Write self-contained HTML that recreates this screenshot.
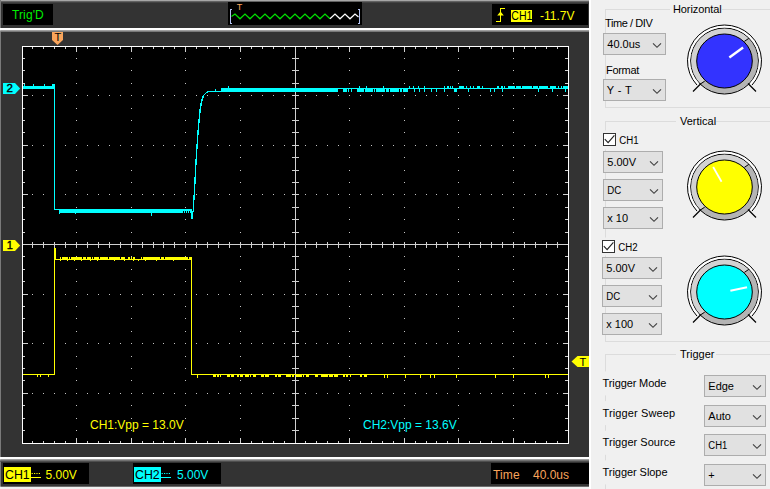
<!DOCTYPE html>
<html><head><meta charset="utf-8"><title>Oscilloscope</title>
<style>
html,body{margin:0;padding:0;background:#f0f0f0;overflow:hidden}
svg{display:block;font-family:"Liberation Sans",Arial,sans-serif}
</style></head><body>
<svg width="770" height="489" viewBox="0 0 770 489">
<rect x="0" y="0" width="770" height="489" fill="#f0f0f0"/>
<rect x="0" y="0" width="589" height="489" fill="#333333"/>
<rect x="0" y="0" width="589" height="1.3" fill="#a6a6a6"/>
<rect x="0" y="1.3" width="589" height="1" fill="#686868"/>
<rect x="0" y="0" width="1" height="489" fill="#7a7a7a"/>
<rect x="0" y="28" width="590" height="2.6" fill="#ffffff"/>
<rect x="0" y="30.6" width="589" height="1.2" fill="#8a8a8a"/>
<rect x="0" y="457" width="590" height="2.6" fill="#ffffff"/>
<rect x="0" y="459.6" width="589" height="1.2" fill="#8a8a8a"/>
<rect x="0" y="460.8" width="589" height="1" fill="#555555"/>
<rect x="0" y="486.7" width="589" height="3" fill="#f0f0f0"/>
<rect x="589" y="0" width="2" height="489" fill="#ffffff"/>
<rect x="3" y="4" width="50" height="21" fill="#000"/>
<rect x="228" y="2" width="134" height="23" fill="#000"/>
<rect x="492" y="4" width="96" height="21" fill="#000"/>
<rect x="3" y="463" width="86" height="21" fill="#000"/>
<rect x="133" y="463" width="88" height="21" fill="#000"/>
<rect x="491" y="463" width="98" height="21" fill="#000"/>
<rect x="22" y="46" width="547" height="398" fill="#000"/>
<path d="M32 95h1v1h-1zM32 145h1v1h-1zM32 194h1v1h-1zM32 294h1v1h-1zM32 343h1v1h-1zM32 393h1v1h-1zM43 95h1v1h-1zM43 145h1v1h-1zM43 194h1v1h-1zM43 294h1v1h-1zM43 343h1v1h-1zM43 393h1v1h-1zM54 95h1v1h-1zM54 145h1v1h-1zM54 194h1v1h-1zM54 294h1v1h-1zM54 343h1v1h-1zM54 393h1v1h-1zM65 95h1v1h-1zM65 145h1v1h-1zM65 194h1v1h-1zM65 294h1v1h-1zM65 343h1v1h-1zM65 393h1v1h-1zM76 58h1v1h-1zM76 70h1v1h-1zM76 83h1v1h-1zM76 95h1v1h-1zM76 108h1v1h-1zM76 120h1v1h-1zM76 132h1v1h-1zM76 145h1v1h-1zM76 157h1v1h-1zM76 170h1v1h-1zM76 182h1v1h-1zM76 194h1v1h-1zM76 207h1v1h-1zM76 219h1v1h-1zM76 232h1v1h-1zM76 244h1v1h-1zM76 256h1v1h-1zM76 269h1v1h-1zM76 281h1v1h-1zM76 294h1v1h-1zM76 306h1v1h-1zM76 318h1v1h-1zM76 331h1v1h-1zM76 343h1v1h-1zM76 356h1v1h-1zM76 368h1v1h-1zM76 380h1v1h-1zM76 393h1v1h-1zM76 405h1v1h-1zM76 418h1v1h-1zM76 430h1v1h-1zM87 95h1v1h-1zM87 145h1v1h-1zM87 194h1v1h-1zM87 294h1v1h-1zM87 343h1v1h-1zM87 393h1v1h-1zM98 95h1v1h-1zM98 145h1v1h-1zM98 194h1v1h-1zM98 294h1v1h-1zM98 343h1v1h-1zM98 393h1v1h-1zM109 95h1v1h-1zM109 145h1v1h-1zM109 194h1v1h-1zM109 294h1v1h-1zM109 343h1v1h-1zM109 393h1v1h-1zM120 95h1v1h-1zM120 145h1v1h-1zM120 194h1v1h-1zM120 294h1v1h-1zM120 343h1v1h-1zM120 393h1v1h-1zM131 58h1v1h-1zM131 70h1v1h-1zM131 83h1v1h-1zM131 95h1v1h-1zM131 108h1v1h-1zM131 120h1v1h-1zM131 132h1v1h-1zM131 145h1v1h-1zM131 157h1v1h-1zM131 170h1v1h-1zM131 182h1v1h-1zM131 194h1v1h-1zM131 207h1v1h-1zM131 219h1v1h-1zM131 232h1v1h-1zM131 244h1v1h-1zM131 256h1v1h-1zM131 269h1v1h-1zM131 281h1v1h-1zM131 294h1v1h-1zM131 306h1v1h-1zM131 318h1v1h-1zM131 331h1v1h-1zM131 343h1v1h-1zM131 356h1v1h-1zM131 368h1v1h-1zM131 380h1v1h-1zM131 393h1v1h-1zM131 405h1v1h-1zM131 418h1v1h-1zM131 430h1v1h-1zM142 95h1v1h-1zM142 145h1v1h-1zM142 194h1v1h-1zM142 294h1v1h-1zM142 343h1v1h-1zM142 393h1v1h-1zM153 95h1v1h-1zM153 145h1v1h-1zM153 194h1v1h-1zM153 294h1v1h-1zM153 343h1v1h-1zM153 393h1v1h-1zM163 95h1v1h-1zM163 145h1v1h-1zM163 194h1v1h-1zM163 294h1v1h-1zM163 343h1v1h-1zM163 393h1v1h-1zM174 95h1v1h-1zM174 145h1v1h-1zM174 194h1v1h-1zM174 294h1v1h-1zM174 343h1v1h-1zM174 393h1v1h-1zM185 58h1v1h-1zM185 70h1v1h-1zM185 83h1v1h-1zM185 95h1v1h-1zM185 108h1v1h-1zM185 120h1v1h-1zM185 132h1v1h-1zM185 145h1v1h-1zM185 157h1v1h-1zM185 170h1v1h-1zM185 182h1v1h-1zM185 194h1v1h-1zM185 207h1v1h-1zM185 219h1v1h-1zM185 232h1v1h-1zM185 244h1v1h-1zM185 256h1v1h-1zM185 269h1v1h-1zM185 281h1v1h-1zM185 294h1v1h-1zM185 306h1v1h-1zM185 318h1v1h-1zM185 331h1v1h-1zM185 343h1v1h-1zM185 356h1v1h-1zM185 368h1v1h-1zM185 380h1v1h-1zM185 393h1v1h-1zM185 405h1v1h-1zM185 418h1v1h-1zM185 430h1v1h-1zM196 95h1v1h-1zM196 145h1v1h-1zM196 194h1v1h-1zM196 294h1v1h-1zM196 343h1v1h-1zM196 393h1v1h-1zM207 95h1v1h-1zM207 145h1v1h-1zM207 194h1v1h-1zM207 294h1v1h-1zM207 343h1v1h-1zM207 393h1v1h-1zM218 95h1v1h-1zM218 145h1v1h-1zM218 194h1v1h-1zM218 294h1v1h-1zM218 343h1v1h-1zM218 393h1v1h-1zM229 95h1v1h-1zM229 145h1v1h-1zM229 194h1v1h-1zM229 294h1v1h-1zM229 343h1v1h-1zM229 393h1v1h-1zM240 58h1v1h-1zM240 70h1v1h-1zM240 83h1v1h-1zM240 95h1v1h-1zM240 108h1v1h-1zM240 120h1v1h-1zM240 132h1v1h-1zM240 145h1v1h-1zM240 157h1v1h-1zM240 170h1v1h-1zM240 182h1v1h-1zM240 194h1v1h-1zM240 207h1v1h-1zM240 219h1v1h-1zM240 232h1v1h-1zM240 244h1v1h-1zM240 256h1v1h-1zM240 269h1v1h-1zM240 281h1v1h-1zM240 294h1v1h-1zM240 306h1v1h-1zM240 318h1v1h-1zM240 331h1v1h-1zM240 343h1v1h-1zM240 356h1v1h-1zM240 368h1v1h-1zM240 380h1v1h-1zM240 393h1v1h-1zM240 405h1v1h-1zM240 418h1v1h-1zM240 430h1v1h-1zM251 95h1v1h-1zM251 145h1v1h-1zM251 194h1v1h-1zM251 294h1v1h-1zM251 343h1v1h-1zM251 393h1v1h-1zM262 95h1v1h-1zM262 145h1v1h-1zM262 194h1v1h-1zM262 294h1v1h-1zM262 343h1v1h-1zM262 393h1v1h-1zM273 95h1v1h-1zM273 145h1v1h-1zM273 194h1v1h-1zM273 294h1v1h-1zM273 343h1v1h-1zM273 393h1v1h-1zM284 95h1v1h-1zM284 145h1v1h-1zM284 194h1v1h-1zM284 294h1v1h-1zM284 343h1v1h-1zM284 393h1v1h-1zM295 95h1v1h-1zM295 145h1v1h-1zM295 194h1v1h-1zM295 294h1v1h-1zM295 343h1v1h-1zM295 393h1v1h-1zM305 95h1v1h-1zM305 145h1v1h-1zM305 194h1v1h-1zM305 294h1v1h-1zM305 343h1v1h-1zM305 393h1v1h-1zM316 95h1v1h-1zM316 145h1v1h-1zM316 194h1v1h-1zM316 294h1v1h-1zM316 343h1v1h-1zM316 393h1v1h-1zM327 95h1v1h-1zM327 145h1v1h-1zM327 194h1v1h-1zM327 294h1v1h-1zM327 343h1v1h-1zM327 393h1v1h-1zM338 95h1v1h-1zM338 145h1v1h-1zM338 194h1v1h-1zM338 294h1v1h-1zM338 343h1v1h-1zM338 393h1v1h-1zM349 58h1v1h-1zM349 70h1v1h-1zM349 83h1v1h-1zM349 95h1v1h-1zM349 108h1v1h-1zM349 120h1v1h-1zM349 132h1v1h-1zM349 145h1v1h-1zM349 157h1v1h-1zM349 170h1v1h-1zM349 182h1v1h-1zM349 194h1v1h-1zM349 207h1v1h-1zM349 219h1v1h-1zM349 232h1v1h-1zM349 244h1v1h-1zM349 256h1v1h-1zM349 269h1v1h-1zM349 281h1v1h-1zM349 294h1v1h-1zM349 306h1v1h-1zM349 318h1v1h-1zM349 331h1v1h-1zM349 343h1v1h-1zM349 356h1v1h-1zM349 368h1v1h-1zM349 380h1v1h-1zM349 393h1v1h-1zM349 405h1v1h-1zM349 418h1v1h-1zM349 430h1v1h-1zM360 95h1v1h-1zM360 145h1v1h-1zM360 194h1v1h-1zM360 294h1v1h-1zM360 343h1v1h-1zM360 393h1v1h-1zM371 95h1v1h-1zM371 145h1v1h-1zM371 194h1v1h-1zM371 294h1v1h-1zM371 343h1v1h-1zM371 393h1v1h-1zM382 95h1v1h-1zM382 145h1v1h-1zM382 194h1v1h-1zM382 294h1v1h-1zM382 343h1v1h-1zM382 393h1v1h-1zM393 95h1v1h-1zM393 145h1v1h-1zM393 194h1v1h-1zM393 294h1v1h-1zM393 343h1v1h-1zM393 393h1v1h-1zM404 58h1v1h-1zM404 70h1v1h-1zM404 83h1v1h-1zM404 95h1v1h-1zM404 108h1v1h-1zM404 120h1v1h-1zM404 132h1v1h-1zM404 145h1v1h-1zM404 157h1v1h-1zM404 170h1v1h-1zM404 182h1v1h-1zM404 194h1v1h-1zM404 207h1v1h-1zM404 219h1v1h-1zM404 232h1v1h-1zM404 244h1v1h-1zM404 256h1v1h-1zM404 269h1v1h-1zM404 281h1v1h-1zM404 294h1v1h-1zM404 306h1v1h-1zM404 318h1v1h-1zM404 331h1v1h-1zM404 343h1v1h-1zM404 356h1v1h-1zM404 368h1v1h-1zM404 380h1v1h-1zM404 393h1v1h-1zM404 405h1v1h-1zM404 418h1v1h-1zM404 430h1v1h-1zM415 95h1v1h-1zM415 145h1v1h-1zM415 194h1v1h-1zM415 294h1v1h-1zM415 343h1v1h-1zM415 393h1v1h-1zM426 95h1v1h-1zM426 145h1v1h-1zM426 194h1v1h-1zM426 294h1v1h-1zM426 343h1v1h-1zM426 393h1v1h-1zM436 95h1v1h-1zM436 145h1v1h-1zM436 194h1v1h-1zM436 294h1v1h-1zM436 343h1v1h-1zM436 393h1v1h-1zM447 95h1v1h-1zM447 145h1v1h-1zM447 194h1v1h-1zM447 294h1v1h-1zM447 343h1v1h-1zM447 393h1v1h-1zM458 58h1v1h-1zM458 70h1v1h-1zM458 83h1v1h-1zM458 95h1v1h-1zM458 108h1v1h-1zM458 120h1v1h-1zM458 132h1v1h-1zM458 145h1v1h-1zM458 157h1v1h-1zM458 170h1v1h-1zM458 182h1v1h-1zM458 194h1v1h-1zM458 207h1v1h-1zM458 219h1v1h-1zM458 232h1v1h-1zM458 244h1v1h-1zM458 256h1v1h-1zM458 269h1v1h-1zM458 281h1v1h-1zM458 294h1v1h-1zM458 306h1v1h-1zM458 318h1v1h-1zM458 331h1v1h-1zM458 343h1v1h-1zM458 356h1v1h-1zM458 368h1v1h-1zM458 380h1v1h-1zM458 393h1v1h-1zM458 405h1v1h-1zM458 418h1v1h-1zM458 430h1v1h-1zM469 95h1v1h-1zM469 145h1v1h-1zM469 194h1v1h-1zM469 294h1v1h-1zM469 343h1v1h-1zM469 393h1v1h-1zM480 95h1v1h-1zM480 145h1v1h-1zM480 194h1v1h-1zM480 294h1v1h-1zM480 343h1v1h-1zM480 393h1v1h-1zM491 95h1v1h-1zM491 145h1v1h-1zM491 194h1v1h-1zM491 294h1v1h-1zM491 343h1v1h-1zM491 393h1v1h-1zM502 95h1v1h-1zM502 145h1v1h-1zM502 194h1v1h-1zM502 294h1v1h-1zM502 343h1v1h-1zM502 393h1v1h-1zM513 58h1v1h-1zM513 70h1v1h-1zM513 83h1v1h-1zM513 95h1v1h-1zM513 108h1v1h-1zM513 120h1v1h-1zM513 132h1v1h-1zM513 145h1v1h-1zM513 157h1v1h-1zM513 170h1v1h-1zM513 182h1v1h-1zM513 194h1v1h-1zM513 207h1v1h-1zM513 219h1v1h-1zM513 232h1v1h-1zM513 244h1v1h-1zM513 256h1v1h-1zM513 269h1v1h-1zM513 281h1v1h-1zM513 294h1v1h-1zM513 306h1v1h-1zM513 318h1v1h-1zM513 331h1v1h-1zM513 343h1v1h-1zM513 356h1v1h-1zM513 368h1v1h-1zM513 380h1v1h-1zM513 393h1v1h-1zM513 405h1v1h-1zM513 418h1v1h-1zM513 430h1v1h-1zM524 95h1v1h-1zM524 145h1v1h-1zM524 194h1v1h-1zM524 294h1v1h-1zM524 343h1v1h-1zM524 393h1v1h-1zM535 95h1v1h-1zM535 145h1v1h-1zM535 194h1v1h-1zM535 294h1v1h-1zM535 343h1v1h-1zM535 393h1v1h-1zM546 95h1v1h-1zM546 145h1v1h-1zM546 194h1v1h-1zM546 294h1v1h-1zM546 343h1v1h-1zM546 393h1v1h-1zM557 95h1v1h-1zM557 145h1v1h-1zM557 194h1v1h-1zM557 294h1v1h-1zM557 343h1v1h-1zM557 393h1v1h-1z" fill="#c4c4c4" shape-rendering="crispEdges"/>
<path d="M23 244h545v1h-545zM295 47h1v396h-1zM32 47h1v2h-1zM32 441h1v2h-1zM32 242h1v6h-1zM43 47h1v2h-1zM43 441h1v2h-1zM43 242h1v6h-1zM54 47h1v2h-1zM54 441h1v2h-1zM54 242h1v6h-1zM65 47h1v2h-1zM65 441h1v2h-1zM65 242h1v6h-1zM76 47h1v5h-1zM76 438h1v5h-1zM76 242h1v6h-1zM87 47h1v2h-1zM87 441h1v2h-1zM87 242h1v6h-1zM98 47h1v2h-1zM98 441h1v2h-1zM98 242h1v6h-1zM109 47h1v2h-1zM109 441h1v2h-1zM109 242h1v6h-1zM120 47h1v2h-1zM120 441h1v2h-1zM120 242h1v6h-1zM131 47h1v5h-1zM131 438h1v5h-1zM131 242h1v6h-1zM142 47h1v2h-1zM142 441h1v2h-1zM142 242h1v6h-1zM153 47h1v2h-1zM153 441h1v2h-1zM153 242h1v6h-1zM163 47h1v2h-1zM163 441h1v2h-1zM163 242h1v6h-1zM174 47h1v2h-1zM174 441h1v2h-1zM174 242h1v6h-1zM185 47h1v5h-1zM185 438h1v5h-1zM185 242h1v6h-1zM196 47h1v2h-1zM196 441h1v2h-1zM196 242h1v6h-1zM207 47h1v2h-1zM207 441h1v2h-1zM207 242h1v6h-1zM218 47h1v2h-1zM218 441h1v2h-1zM218 242h1v6h-1zM229 47h1v2h-1zM229 441h1v2h-1zM229 242h1v6h-1zM240 47h1v5h-1zM240 438h1v5h-1zM240 242h1v6h-1zM251 47h1v2h-1zM251 441h1v2h-1zM251 242h1v6h-1zM262 47h1v2h-1zM262 441h1v2h-1zM262 242h1v6h-1zM273 47h1v2h-1zM273 441h1v2h-1zM273 242h1v6h-1zM284 47h1v2h-1zM284 441h1v2h-1zM284 242h1v6h-1zM295 47h1v5h-1zM295 438h1v5h-1zM305 47h1v2h-1zM305 441h1v2h-1zM305 242h1v6h-1zM316 47h1v2h-1zM316 441h1v2h-1zM316 242h1v6h-1zM327 47h1v2h-1zM327 441h1v2h-1zM327 242h1v6h-1zM338 47h1v2h-1zM338 441h1v2h-1zM338 242h1v6h-1zM349 47h1v5h-1zM349 438h1v5h-1zM349 242h1v6h-1zM360 47h1v2h-1zM360 441h1v2h-1zM360 242h1v6h-1zM371 47h1v2h-1zM371 441h1v2h-1zM371 242h1v6h-1zM382 47h1v2h-1zM382 441h1v2h-1zM382 242h1v6h-1zM393 47h1v2h-1zM393 441h1v2h-1zM393 242h1v6h-1zM404 47h1v5h-1zM404 438h1v5h-1zM404 242h1v6h-1zM415 47h1v2h-1zM415 441h1v2h-1zM415 242h1v6h-1zM426 47h1v2h-1zM426 441h1v2h-1zM426 242h1v6h-1zM436 47h1v2h-1zM436 441h1v2h-1zM436 242h1v6h-1zM447 47h1v2h-1zM447 441h1v2h-1zM447 242h1v6h-1zM458 47h1v5h-1zM458 438h1v5h-1zM458 242h1v6h-1zM469 47h1v2h-1zM469 441h1v2h-1zM469 242h1v6h-1zM480 47h1v2h-1zM480 441h1v2h-1zM480 242h1v6h-1zM491 47h1v2h-1zM491 441h1v2h-1zM491 242h1v6h-1zM502 47h1v2h-1zM502 441h1v2h-1zM502 242h1v6h-1zM513 47h1v5h-1zM513 438h1v5h-1zM513 242h1v6h-1zM524 47h1v2h-1zM524 441h1v2h-1zM524 242h1v6h-1zM535 47h1v2h-1zM535 441h1v2h-1zM535 242h1v6h-1zM546 47h1v2h-1zM546 441h1v2h-1zM546 242h1v6h-1zM557 47h1v2h-1zM557 441h1v2h-1zM557 242h1v6h-1zM23 58h2v1h-2zM565 58h3v1h-3zM292 58h7v1h-7zM23 70h2v1h-2zM565 70h3v1h-3zM292 70h7v1h-7zM23 83h2v1h-2zM565 83h3v1h-3zM292 83h7v1h-7zM23 95h5v1h-5zM563 95h5v1h-5zM292 95h7v1h-7zM23 108h2v1h-2zM565 108h3v1h-3zM292 108h7v1h-7zM23 120h2v1h-2zM565 120h3v1h-3zM292 120h7v1h-7zM23 132h2v1h-2zM565 132h3v1h-3zM292 132h7v1h-7zM23 145h5v1h-5zM563 145h5v1h-5zM292 145h7v1h-7zM23 157h2v1h-2zM565 157h3v1h-3zM292 157h7v1h-7zM23 170h2v1h-2zM565 170h3v1h-3zM292 170h7v1h-7zM23 182h2v1h-2zM565 182h3v1h-3zM292 182h7v1h-7zM23 194h5v1h-5zM563 194h5v1h-5zM292 194h7v1h-7zM23 207h2v1h-2zM565 207h3v1h-3zM292 207h7v1h-7zM23 219h2v1h-2zM565 219h3v1h-3zM292 219h7v1h-7zM23 232h2v1h-2zM565 232h3v1h-3zM292 232h7v1h-7zM23 244h5v1h-5zM563 244h5v1h-5zM23 256h2v1h-2zM565 256h3v1h-3zM292 256h7v1h-7zM23 269h2v1h-2zM565 269h3v1h-3zM292 269h7v1h-7zM23 281h2v1h-2zM565 281h3v1h-3zM292 281h7v1h-7zM23 294h5v1h-5zM563 294h5v1h-5zM292 294h7v1h-7zM23 306h2v1h-2zM565 306h3v1h-3zM292 306h7v1h-7zM23 318h2v1h-2zM565 318h3v1h-3zM292 318h7v1h-7zM23 331h2v1h-2zM565 331h3v1h-3zM292 331h7v1h-7zM23 343h5v1h-5zM563 343h5v1h-5zM292 343h7v1h-7zM23 356h2v1h-2zM565 356h3v1h-3zM292 356h7v1h-7zM23 368h2v1h-2zM565 368h3v1h-3zM292 368h7v1h-7zM23 380h2v1h-2zM565 380h3v1h-3zM292 380h7v1h-7zM23 393h5v1h-5zM563 393h5v1h-5zM292 393h7v1h-7zM23 405h2v1h-2zM565 405h3v1h-3zM292 405h7v1h-7zM23 418h2v1h-2zM565 418h3v1h-3zM292 418h7v1h-7zM23 430h2v1h-2zM565 430h3v1h-3zM292 430h7v1h-7z" fill="#d0d0d0" shape-rendering="crispEdges"/>
<path d="M22 46h547v1h-547zM22 443h547v1h-547zM22 46h1v398h-1zM568 46h1v398h-1z" fill="#ffffff" shape-rendering="crispEdges"/>
<path d="M23 86h32v3h-32zM24 84h1v2h-1zM33 84h1v2h-1zM44 84h1v2h-1zM52 84h3v3h-3zM54 86h1v124h-1zM54 209h5v1h-5zM59 209h124v4h-124zM59 213h1v1h-1zM75 213h1v1h-1zM151 213h1v3h-1zM183 209h9v2h-9zM184 211h1v2h-1zM186 211h1v2h-1zM188 211h1v2h-1zM190 211h1v2h-1zM191 211h2v8h-2zM193 195h1v17h-1zM194 177h1v23h-1zM195 159h1v25h-1zM196 144h1v21h-1zM197 130h1v19h-1zM198 119h1v16h-1zM199 109h1v14h-1zM200 103h1v10h-1zM201 99h1v7h-1zM202 96h1v5h-1zM203 95h1v3h-1zM204 94h1v1h-1zM205 93h1v1h-1zM206 92h1v1h-1zM207 92h1v1h-1zM207 91h14v1h-14zM221 88h117v4h-117zM215 89h1v2h-1zM228 86h1v2h-1zM233 88h1v1h-1zM338 88h230v1h-230zM343 89h1v3h-1zM344 89h3v3h-3zM348 89h1v3h-1zM351 89h1v3h-1zM357 89h5v3h-5zM362 89h2v3h-2zM365 89h3v3h-3zM368 89h5v3h-5zM374 89h1v3h-1zM376 89h3v3h-3zM379 89h5v3h-5zM391 89h3v3h-3zM396 89h3v3h-3zM400 89h2v3h-2zM403 89h5v3h-5zM359 86h1v2h-1zM366 86h1v2h-1zM383 86h1v2h-1zM409 86h1v2h-1zM413 86h1v2h-1zM418 86h1v2h-1zM424 86h1v2h-1zM444 86h1v2h-1zM452 86h1v2h-1zM463 86h1v2h-1zM470 86h1v2h-1zM447 86h2v2h-2zM450 86h1v2h-1zM452 86h1v2h-1zM459 86h4v2h-4zM466 86h1v2h-1zM473 86h1v2h-1zM477 86h3v2h-3zM482 86h1v2h-1zM497 86h2v2h-2zM501 86h2v2h-2zM504 86h1v2h-1zM419 89h1v3h-1zM424 89h1v3h-1zM431 89h1v3h-1zM414 89h1v3h-1zM436 89h1v3h-1zM444 89h1v3h-1zM468 89h1v3h-1zM490 89h1v3h-1zM494 89h1v3h-1zM502 89h1v3h-1zM538 89h1v3h-1zM552 89h1v3h-1zM565 89h1v3h-1zM454 89h3v3h-3zM380 89h5v3h-5zM386 89h3v3h-3zM390 89h3v3h-3zM394 89h5v3h-5zM508 86h7v2h-7zM516 86h3v2h-3zM519 86h2v2h-2zM522 86h10v2h-10zM533 86h3v2h-3zM536 86h2v2h-2zM539 86h3v2h-3zM542 86h6v2h-6zM550 86h6v2h-6zM558 86h1v2h-1zM561 86h1v2h-1zM563 86h5v2h-5z" fill="#00ffff" shape-rendering="crispEdges"/>
<path d="M23 374h32v1h-32zM37 375h1v2h-1zM40 375h1v2h-1zM48 375h1v2h-1zM54 248h1v127h-1zM55 248h1v12h-1zM56 259h136v1h-136zM60 257h1v2h-1zM62 257h2v2h-2zM64 257h4v2h-4zM69 257h1v2h-1zM71 257h11v2h-11zM83 257h3v2h-3zM87 257h4v2h-4zM92 257h1v2h-1zM94 257h4v2h-4zM98 257h1v2h-1zM100 257h8v2h-8zM109 257h11v2h-11zM121 257h4v2h-4zM128 257h2v2h-2zM131 257h1v2h-1zM133 257h2v2h-2zM141 257h1v2h-1zM143 257h6v2h-6zM149 257h11v2h-11zM161 257h3v2h-3zM165 257h8v2h-8zM173 257h2v2h-2zM175 257h2v2h-2zM177 257h4v2h-4zM181 257h3v2h-3zM184 257h4v2h-4zM189 257h2v2h-2zM60 260h1v1h-1zM67 260h1v1h-1zM74 260h1v1h-1zM81 260h1v1h-1zM90 260h1v1h-1zM97 260h1v1h-1zM114 260h1v1h-1zM124 260h1v1h-1zM133 260h1v1h-1zM138 260h1v1h-1zM145 260h1v1h-1zM156 260h1v1h-1zM173 260h1v1h-1zM191 257h1v118h-1zM191 374h377v1h-377zM213 375h3v2h-3zM217 375h2v2h-2zM220 375h1v2h-1zM227 375h3v2h-3zM231 375h3v2h-3zM237 375h2v2h-2zM240 375h3v2h-3zM245 375h4v2h-4zM250 375h1v2h-1zM253 375h3v2h-3zM261 375h3v2h-3zM265 375h4v2h-4zM275 375h2v2h-2zM278 375h3v2h-3zM286 375h5v2h-5zM292 375h2v2h-2zM296 375h6v2h-6zM303 375h1v2h-1zM306 375h3v2h-3zM315 375h3v2h-3zM321 375h7v2h-7zM329 375h4v2h-4zM334 375h4v2h-4zM343 375h2v2h-2zM346 375h2v2h-2zM350 375h1v2h-1zM360 375h2v2h-2zM364 375h3v2h-3zM197 375h1v3h-1zM384 375h1v3h-1zM387 375h1v3h-1zM405 375h1v3h-1zM420 375h1v3h-1zM430 375h1v3h-1zM434 375h1v3h-1zM456 375h1v3h-1zM495 375h1v3h-1zM513 375h1v3h-1zM545 375h1v3h-1zM548 375h1v3h-1z" fill="#ffff00" shape-rendering="crispEdges"/>
<path d="M52 32H63V40L57.5 45L52 40Z" fill="#f9a55c"/>
<path d="M3 83H15L20.2 88.5L15 94H3Z" fill="#00ffff"/>
<path d="M3 240H15L20.2 245.5L15 251H3Z" fill="#ffff00"/>
<path d="M589 356H577.5L571.5 361.5L577.5 367H589Z" fill="#ffff00"/>
<polyline points="231.5,16.5 235,14.0 240,18.8 245,14.0 250,18.8 255,14.0 260,18.8 265,14.0 270,18.8 275,14.0 280,18.8 285,14.0 290,18.8 295,14.0 300,18.8 305,14.0 310,18.8 315,14.0 320,18.8 325,14.0 330,18.8" stroke="#00e000" stroke-width="1.2" fill="none"/>
<polyline points="330,18.8 335,14.0 340,18.8 345,14.0 350,18.8 355,14.0 358.5,17" stroke="#ffffff" stroke-width="1.2" fill="none"/>
<path d="M232 9.5H230.5V23.5H232M358 9.5H359.5V23.5H358" stroke="#b4c4f4" stroke-width="1" fill="none" shape-rendering="crispEdges"/>
<path d="M496 21.5H500.5V8.5H504.5" stroke="#ffff00" stroke-width="1" fill="none" shape-rendering="crispEdges"/>
<path d="M500.5 11.5L503.8 15.5H497.2Z" fill="#ffff00"/>
<rect x="511" y="10" width="21" height="12" fill="#ffff00"/>
<rect x="4" y="467" width="27" height="15" fill="#ffff00"/>
<rect x="134" y="467" width="27" height="15" fill="#00ffff"/>
<path d="M31 477.5H41" stroke="#ffff00" stroke-width="1" shape-rendering="crispEdges"/>
<path d="M31.6 473h1.2v1h-1.2zM34 473h1.2v1h-1.2zM36.4 473h1.2v1h-1.2zM38.8 473h1.2v1h-1.2z" fill="#ffff00"/>
<path d="M161 477.5H171" stroke="#00ffff" stroke-width="1" shape-rendering="crispEdges"/>
<path d="M161.6 473h1.2v1h-1.2zM164 473h1.2v1h-1.2zM166.4 473h1.2v1h-1.2zM168.8 473h1.2v1h-1.2z" fill="#00ffff"/>
<text x="12" y="19" fill="#00f000" font-size="12" text-anchor="start"  letter-spacing="0.12">Trig'D</text>
<text x="236.8" y="10" fill="#f9a55c" font-size="9" text-anchor="start" >T</text>
<text transform="translate(511.3 19.8) scale(0.88 1)" fill="#000" font-size="12" text-anchor="start" >CH1</text>
<text x="540" y="19.8" fill="#ffff00" font-size="12" text-anchor="start" >-11.7V</text>
<text x="54.5" y="41" fill="#000" font-size="11" text-anchor="start" >T</text>
<text transform="translate(6.6 92.4) scale(1.15 1)" fill="#000" font-size="10" text-anchor="start" stroke="#000" stroke-width="0.35">2</text>
<text transform="translate(6.8 248.9) scale(1.1 1)" fill="#000" font-size="10" text-anchor="start" stroke="#000" stroke-width="0.35">1</text>
<text x="579.6" y="366" fill="#000" font-size="11" text-anchor="start" >T</text>
<text x="90" y="429" fill="#ffff00" font-size="12" text-anchor="start" >CH1:Vpp = 13.0V</text>
<text x="363" y="429" fill="#00ffff" font-size="12" text-anchor="start" >CH2:Vpp = 13.6V</text>
<text transform="translate(5 478.8) scale(1.03 1)" fill="#000" font-size="12" text-anchor="start" >CH1</text>
<text x="45.5" y="479" fill="#ffff00" font-size="12" text-anchor="start" >5.00V</text>
<text transform="translate(135 478.8) scale(1.03 1)" fill="#000" font-size="12" text-anchor="start" >CH2</text>
<text x="177" y="479" fill="#00ffff" font-size="12" text-anchor="start" >5.00V</text>
<text x="493" y="479" fill="#f9a55c" font-size="12" text-anchor="start"  letter-spacing="0.15">Time</text>
<text x="533" y="479" fill="#f9a55c" font-size="12" text-anchor="start" >40.0us</text>
<path d="M670 9.5H605.5V107.5H770" stroke="#dcdcdc" fill="none" shape-rendering="crispEdges"/>
<path d="M722 9.5H770" stroke="#dcdcdc" fill="none" shape-rendering="crispEdges"/>
<text x="673" y="12.7" fill="#000" font-size="11" text-anchor="start"  letter-spacing="-0.1">Horizontal</text>
<path d="M676 121.5H605.5V341.5H770" stroke="#dcdcdc" fill="none" shape-rendering="crispEdges"/>
<path d="M716 121.5H770" stroke="#dcdcdc" fill="none" shape-rendering="crispEdges"/>
<text x="680" y="124.7" fill="#000" font-size="11" text-anchor="start" >Vertical</text>
<path d="M676 354.5H605.5V500H770" stroke="#dcdcdc" fill="none" shape-rendering="crispEdges"/>
<path d="M716 354.5H770" stroke="#dcdcdc" fill="none" shape-rendering="crispEdges"/>
<text x="680" y="357.7" fill="#000" font-size="11" text-anchor="start" >Trigger</text>
<text x="605" y="27" fill="#000" font-size="11" text-anchor="start"  letter-spacing="-0.42">Time / DIV</text>
<rect x="603.5" y="33.5" width="62" height="21" fill="#e1e1e1" stroke="#adadad" shape-rendering="crispEdges"/>
<text x="607.3" y="48.2" fill="#000" font-size="11" text-anchor="start" >40.0us</text>
<path d="M653 43.3L657 47.3L661 43.3" stroke="#404040" stroke-width="1.15" fill="none"/>
<text x="606" y="73.7" fill="#000" font-size="11" text-anchor="start"  letter-spacing="-0.32">Format</text>
<rect x="603.5" y="79.5" width="62" height="21" fill="#e1e1e1" stroke="#adadad" shape-rendering="crispEdges"/>
<text x="606.8" y="94.2" fill="#000" font-size="11" text-anchor="start"  letter-spacing="0.35">Y - T</text>
<path d="M653 89.3L657 93.3L661 89.3" stroke="#404040" stroke-width="1.15" fill="none"/>
<rect x="603" y="130.5" width="40" height="19" fill="#f0f0f0"/>
<rect x="603.5" y="133.5" width="12" height="12" fill="#fff" stroke="#333" shape-rendering="crispEdges"/>
<path d="M604.8 139.2L608.1 142.6L614.4 135.4" stroke="#222" stroke-width="1.15" fill="none"/>
<text transform="translate(619.3 143.7) scale(0.88 1)" fill="#000" font-size="11" text-anchor="start" >CH1</text>
<rect x="603.5" y="151.5" width="59" height="21" fill="#e1e1e1" stroke="#adadad" shape-rendering="crispEdges"/>
<text x="607.3" y="166.2" fill="#000" font-size="11" text-anchor="start" >5.00V</text>
<path d="M650 161.3L654 165.3L658 161.3" stroke="#404040" stroke-width="1.15" fill="none"/>
<rect x="603.5" y="179.5" width="59" height="21" fill="#e1e1e1" stroke="#adadad" shape-rendering="crispEdges"/>
<text transform="translate(607.3 194.2) scale(0.88 1)" fill="#000" font-size="11" text-anchor="start" >DC</text>
<path d="M650 189.3L654 193.3L658 189.3" stroke="#404040" stroke-width="1.15" fill="none"/>
<rect x="603.5" y="207.5" width="59" height="21" fill="#e1e1e1" stroke="#adadad" shape-rendering="crispEdges"/>
<text x="607.3" y="222.2" fill="#000" font-size="11" text-anchor="start" >x 10</text>
<path d="M650 217.3L654 221.3L658 217.3" stroke="#404040" stroke-width="1.15" fill="none"/>
<rect x="602" y="237.5" width="40" height="18" fill="#f0f0f0"/>
<rect x="602.5" y="240.5" width="12" height="12" fill="#fff" stroke="#333" shape-rendering="crispEdges"/>
<path d="M603.8 246.2L607.1 249.6L613.4 242.4" stroke="#222" stroke-width="1.15" fill="none"/>
<text transform="translate(618.3 250.7) scale(0.88 1)" fill="#000" font-size="11" text-anchor="start" >CH2</text>
<rect x="602.5" y="257.5" width="59" height="21" fill="#e1e1e1" stroke="#adadad" shape-rendering="crispEdges"/>
<text x="606.3" y="272.2" fill="#000" font-size="11" text-anchor="start" >5.00V</text>
<path d="M649 267.3L653 271.3L657 267.3" stroke="#404040" stroke-width="1.15" fill="none"/>
<rect x="602.5" y="285.5" width="59" height="21" fill="#e1e1e1" stroke="#adadad" shape-rendering="crispEdges"/>
<text transform="translate(606.3 300.2) scale(0.88 1)" fill="#000" font-size="11" text-anchor="start" >DC</text>
<path d="M649 295.3L653 299.3L657 295.3" stroke="#404040" stroke-width="1.15" fill="none"/>
<rect x="602.5" y="313.5" width="59" height="21" fill="#e1e1e1" stroke="#adadad" shape-rendering="crispEdges"/>
<text x="606.3" y="328.2" fill="#000" font-size="11" text-anchor="start" >x 100</text>
<path d="M649 323.3L653 327.3L657 323.3" stroke="#404040" stroke-width="1.15" fill="none"/>
<rect x="602" y="371.4" width="80" height="24" fill="#f0f0f0"/>
<text x="602.6" y="387.0" fill="#000" font-size="11" text-anchor="start"  letter-spacing="-0.12">Trigger Mode</text>
<rect x="704.5" y="375.5" width="61" height="21" fill="#e1e1e1" stroke="#adadad" shape-rendering="crispEdges"/>
<text x="708.3" y="390.2" fill="#000" font-size="11" text-anchor="start" >Edge</text>
<path d="M753 385.3L757 389.3L761 385.3" stroke="#404040" stroke-width="1.15" fill="none"/>
<rect x="602" y="401.1" width="80" height="24" fill="#f0f0f0"/>
<text x="602.6" y="417.0" fill="#000" font-size="11" text-anchor="start"  letter-spacing="0.12">Trigger Sweep</text>
<rect x="704.5" y="405.5" width="61" height="21" fill="#e1e1e1" stroke="#adadad" shape-rendering="crispEdges"/>
<text x="708.3" y="420.2" fill="#000" font-size="11" text-anchor="start" >Auto</text>
<path d="M753 415.3L757 419.3L761 415.3" stroke="#404040" stroke-width="1.15" fill="none"/>
<rect x="602" y="430.8" width="80" height="24" fill="#f0f0f0"/>
<text x="602.6" y="446.0" fill="#000" font-size="11" text-anchor="start"  letter-spacing="0.03">Trigger Source</text>
<rect x="704.5" y="434.5" width="61" height="21" fill="#e1e1e1" stroke="#adadad" shape-rendering="crispEdges"/>
<text transform="translate(708.3 449.2) scale(0.86 1)" fill="#000" font-size="11" text-anchor="start" >CH1</text>
<path d="M753 444.3L757 448.3L761 444.3" stroke="#404040" stroke-width="1.15" fill="none"/>
<rect x="602" y="460.4" width="80" height="24" fill="#f0f0f0"/>
<text x="602.6" y="476.0" fill="#000" font-size="11" text-anchor="start"  letter-spacing="-0.06">Trigger Slope</text>
<rect x="704.5" y="464.5" width="61" height="21" fill="#e1e1e1" stroke="#adadad" shape-rendering="crispEdges"/>
<text x="708.3" y="479.2" fill="#000" font-size="11" text-anchor="start" >+</text>
<path d="M753 474.3L757 478.3L761 474.3" stroke="#404040" stroke-width="1.15" fill="none"/>
<ellipse cx="724.5" cy="61.0" rx="34" ry="33" fill="#d2d2d2"/>
<path d="M748.54 37.67A34 33 0 0 1 700.46 84.33Z" fill="#b4b4b4"/>
<ellipse cx="724.5" cy="61.0" rx="34" ry="33" fill="none" stroke="#000" stroke-width="1"/>
<path d="M698.12 84.09A35.5 34.5 0 1 1 750.88 84.09" fill="none" stroke="#fff" stroke-width="2.2"/>
<path d="M697.00 85.09A37 36 0 1 1 752.00 85.09" fill="none" stroke="#000" stroke-width="1"/>
<path d="M701.0 83.5L693.0 91.5M748.0 83.5L756.0 91.5" stroke="#000" stroke-width="1.2" fill="none"/>
<path d="M744.3 41.4L748.8 38.4M704.7 81.2L700.5 83.9" stroke="#000" stroke-width="1" fill="none"/>
<ellipse cx="724.5" cy="61.0" rx="27.8" ry="27" fill="#3333ff" stroke="#000" stroke-width="1"/>
<path d="M729.35 57.47L743.11 47.48" stroke="#fff" stroke-width="2.4" fill="none"/>
<ellipse cx="724.5" cy="187.0" rx="34" ry="33" fill="#d2d2d2"/>
<path d="M748.54 163.67A34 33 0 0 1 700.46 210.33Z" fill="#b4b4b4"/>
<ellipse cx="724.5" cy="187.0" rx="34" ry="33" fill="none" stroke="#000" stroke-width="1"/>
<path d="M698.12 210.09A35.5 34.5 0 1 1 750.88 210.09" fill="none" stroke="#fff" stroke-width="2.2"/>
<path d="M697.00 211.09A37 36 0 1 1 752.00 211.09" fill="none" stroke="#000" stroke-width="1"/>
<path d="M701.0 209.5L693.0 217.5M748.0 209.5L756.0 217.5" stroke="#000" stroke-width="1.2" fill="none"/>
<path d="M744.3 167.4L748.8 164.4M704.7 207.2L700.5 209.9" stroke="#000" stroke-width="1" fill="none"/>
<ellipse cx="724.5" cy="187.0" rx="27.8" ry="27" fill="#ffff00" stroke="#000" stroke-width="1"/>
<path d="M721.55 181.78L713.17 166.98" stroke="#fff" stroke-width="1.8" fill="none"/>
<ellipse cx="724.5" cy="292.0" rx="34" ry="33" fill="#d2d2d2"/>
<path d="M748.54 268.67A34 33 0 0 1 700.46 315.33Z" fill="#b4b4b4"/>
<ellipse cx="724.5" cy="292.0" rx="34" ry="33" fill="none" stroke="#000" stroke-width="1"/>
<path d="M698.12 315.09A35.5 34.5 0 1 1 750.88 315.09" fill="none" stroke="#fff" stroke-width="2.2"/>
<path d="M697.00 316.09A37 36 0 1 1 752.00 316.09" fill="none" stroke="#000" stroke-width="1"/>
<path d="M701.0 314.5L693.0 322.5M748.0 314.5L756.0 322.5" stroke="#000" stroke-width="1.2" fill="none"/>
<path d="M744.3 272.4L748.8 269.4M704.7 312.2L700.5 314.9" stroke="#000" stroke-width="1" fill="none"/>
<ellipse cx="724.5" cy="292.0" rx="27.8" ry="27" fill="#00ffff" stroke="#000" stroke-width="1"/>
<path d="M730.37 290.75L747.00 287.22" stroke="#fff" stroke-width="2.2" fill="none"/>
</svg>
</body></html>
